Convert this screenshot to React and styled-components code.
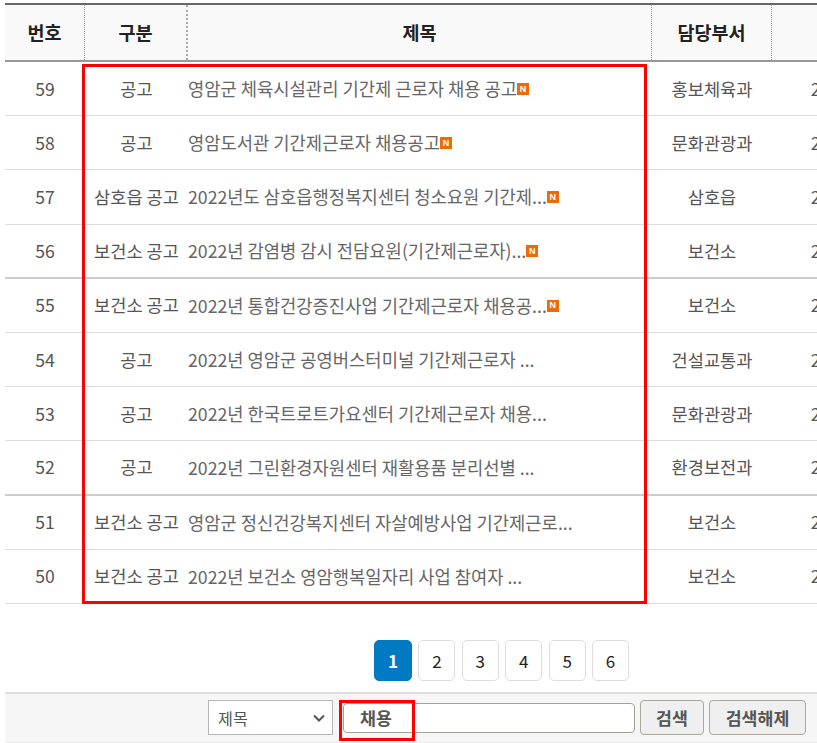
import React from "react";
import styled, { createGlobalStyle } from "styled-components";

const GlobalStyle = createGlobalStyle`
  html, body {
    margin: 0;
    padding: 0;
    background: #fff;
  }
  body {
    font-family: "Noto Sans CJK KR", "Noto Sans", sans-serif;
    overflow: hidden;
  }
`;

const Page = styled.div`
  position: relative;
  width: 817px;
  height: 743px;
  overflow: hidden;
  padding: 3px 0 0 5px;
  box-sizing: border-box;
`;

const columns = "80px 103px 464px 120px 168px";

const Board = styled.div`
  width: 935px;
`;

const HeadRow = styled.div`
  display: grid;
  grid-template-columns: ${columns};
  height: 59px;
  box-sizing: border-box;
  border-top: 2px solid #666;
  border-bottom: 2px solid #999;
  background: #f9f9f9;
`;

const HeadCell = styled.div`
  display: flex;
  align-items: center;
  justify-content: center;
  padding-bottom: 1px;
  font-size: 18.5px;
  font-weight: 700;
  color: #222;
  border-right: ${(p) => (p.$heavy ? "2px dotted #aaa" : "1px dotted #999")};
  box-sizing: border-box;
  &:last-child {
    border-right: 0;
  }
`;

const Row = styled.div`
  display: grid;
  grid-template-columns: ${columns};
  height: 54.2px;
  box-sizing: border-box;
  border-bottom: ${(p) => (p.$strong ? "2px solid #ccc" : "1px solid #ddd")};
`;

const Cell = styled.div`
  display: flex;
  align-items: center;
  justify-content: center;
  padding-bottom: 1px;
  font-size: 17.6px;
  color: #555;
  white-space: nowrap;
  overflow: hidden;
`;

const TitleCell = styled(Cell)`
  justify-content: flex-start;
  font-size: 17.7px;
  color: #666;
`;

const NewBadge = styled.span`
  display: inline-flex;
  align-items: center;
  justify-content: center;
  width: 12px;
  height: 12px;
  margin-top: 2px;
  background: #ee6a05;
  color: #fff;
  font-family: "Liberation Sans", sans-serif;
  font-size: 9px;
  font-weight: 700;
  line-height: 1;
`;

const Pager = styled.div`
  display: flex;
  justify-content: flex-end;
  gap: 6.4px;
  height: 41px;
  margin: 36px 188px 0 0;
`;

const PageButton = styled.a`
  display: flex;
  align-items: center;
  justify-content: center;
  width: ${(p) => (p.$active ? 38 : 37)}px;
  box-sizing: border-box;
  border: 1px solid ${(p) => (p.$active ? "#007ac3" : "#ddd")};
  border-radius: 5px;
  background: ${(p) => (p.$active ? "#007ac3" : "#fff")};
  color: ${(p) => (p.$active ? "#fff" : "#222")};
  font-size: 17px;
  font-weight: ${(p) => (p.$active ? 700 : 400)};
`;

const SearchBar = styled.form`
  display: flex;
  align-items: center;
  width: 812px;
  height: 51px;
  margin-top: 11px;
  padding-left: 203px;
  box-sizing: border-box;
  border-top: 2px solid #ddd;
  border-bottom: 1px solid #eee;
  background: #f6f6f6;
`;

const SelectBox = styled.div`
  display: flex;
  align-items: center;
  justify-content: space-between;
  width: 125px;
  height: 35px;
  padding: 0 6px 0 9px;
  box-sizing: border-box;
  border: 1px solid #b5b5b5;
  background: #fff;
  font-size: 16.2px;
  color: #555;
`;

const Keyword = styled.div`
  display: flex;
  align-items: center;
  width: 292px;
  height: 30px;
  margin-left: 10px;
  padding-left: 16px;
  box-sizing: border-box;
  border: 1px solid #a3a095;
  border-radius: 4px;
  background: #fff;
  font-size: 17.3px;
  font-weight: 700;
  color: #555;
`;

const SearchButton = styled.button`
  width: ${(p) => p.$width}px;
  height: 35px;
  margin-left: 5px;
  padding: 0;
  border: 1px solid #aaa89f;
  border-radius: 4px;
  background: #efefef;
  font-family: inherit;
  font-size: 17.3px;
  font-weight: 700;
  color: #555;
`;

const Highlight = styled.div`
  position: absolute;
  left: ${(p) => p.$x}px;
  top: ${(p) => p.$y}px;
  width: ${(p) => p.$w}px;
  height: ${(p) => p.$h}px;
  box-sizing: border-box;
  border: 3px solid #f00;
  pointer-events: none;
`;

const rows = [
  [59, "공고", "영암군 체육시설관리 기간제 근로자 채용 공고", "홍보체육과", true],
  [58, "공고", "영암도서관 기간제근로자 채용공고", "문화관광과", true],
  [57, "삼호읍 공고", "2022년도 삼호읍행정복지센터 청소요원 기간제...", "삼호읍", true],
  [56, "보건소 공고", "2022년 감염병 감시 전담요원(기간제근로자)...", "보건소", true],
  [55, "보건소 공고", "2022년 통합건강증진사업 기간제근로자 채용공...", "보건소", true],
  [54, "공고", "2022년 영암군 공영버스터미널 기간제근로자 ...", "건설교통과", false],
  [53, "공고", "2022년 한국트로트가요센터 기간제근로자 채용...", "문화관광과", false],
  [52, "공고", "2022년 그린환경자원센터 재활용품 분리선별 ...", "환경보전과", false],
  [51, "보건소 공고", "영암군 정신건강복지센터 자살예방사업 기간제근로...", "보건소", false],
  [50, "보건소 공고", "2022년 보건소 영암행복일자리 사업 참여자 ...", "보건소", false],
];

const App = () => (
  <Page>
    <GlobalStyle />
    <Board>
      <HeadRow>
        <HeadCell>번호</HeadCell>
        <HeadCell $heavy>구분</HeadCell>
        <HeadCell>제목</HeadCell>
        <HeadCell>담당부서</HeadCell>
        <HeadCell>작성일</HeadCell>
      </HeadRow>
      {rows.map(([no, type, title, dept, isNew]) => (
        <Row key={no} $strong={no === 56 || no === 52}>
          <Cell>{no}</Cell>
          <Cell>{type}</Cell>
          <TitleCell>
            {title}
            {isNew && <NewBadge>N</NewBadge>}
          </TitleCell>
          <Cell>{dept}</Cell>
          <Cell>2022-03-02</Cell>
        </Row>
      ))}
    </Board>
    <Pager>
      {[1, 2, 3, 4, 5, 6].map((n) => (
        <PageButton key={n} $active={n === 1}>
          {n}
        </PageButton>
      ))}
    </Pager>
    <SearchBar>
      <SelectBox>
        제목
        <svg width="14" height="14" viewBox="0 0 14 14" fill="none">
          <path d="M2 4.5 7 9.5 12 4.5" stroke="#555" strokeWidth="2" />
        </svg>
      </SelectBox>
      <Keyword>채용</Keyword>
      <SearchButton type="button" $width={64}>
        검색
      </SearchButton>
      <SearchButton type="button" $width={97}>
        검색해제
      </SearchButton>
    </SearchBar>
    <Highlight $x={82} $y={64} $w={565} $h={540} />
    <Highlight $x={339} $y={700} $w={76} $h={41} />
  </Page>
);

export default App;
